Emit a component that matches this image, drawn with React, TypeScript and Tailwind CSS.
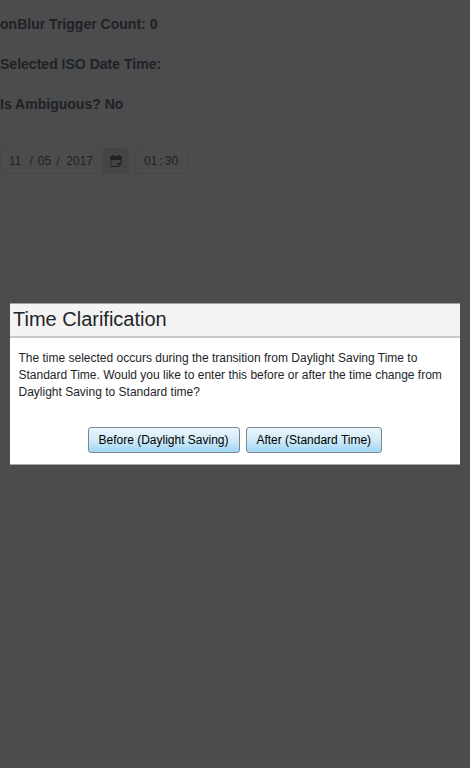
export default function App() {
  return (
    <div className="flex h-[768px] w-[470px] flex-col overflow-hidden bg-[#4b4c4e] font-['Liberation_Sans',Arial,sans-serif] text-[#202224]">
      <div className="flex h-[303px] flex-col">
        <div className="flex flex-col gap-5 pt-[14px] text-[14.04px] leading-5 font-bold">
          <p>onBlur Trigger Count: 0</p>
          <p>Selected ISO Date Time:</p>
          <p>Is Ambiguous? No</p>
        </div>
        <div className="mt-[34px] flex gap-[6px] text-[12px] leading-6">
          <div className="flex h-[26px] w-[129px] overflow-hidden rounded-[3px] border border-[#454648]">
            <div className="flex w-[102px] pl-[8px] whitespace-pre">
              <span className="w-[20.5px]">11</span>
              <span className="w-[8.3px]">/</span>
              <span className="w-[18.5px]">05</span>
              <span className="w-[10px]">/</span>
              <span>2017</span>
            </div>
            <div className="flex flex-1 items-center justify-center bg-[#434547]">
              <svg width="12" height="12" viewBox="0 0 12 12" fill="currentColor">
                <path fillRule="evenodd" d="M1 1h1V0h2v1h4V0h2v1h1a.6.6 0 0 1 .6.6V8.5L8.5 12H1a.6.6 0 0 1-.6-.6V1.6A.6.6 0 0 1 1 1Zm.3 4v6h6V8h3.3V5Zm7 4v1.8L10.1 9Z" />
              </svg>
            </div>
          </div>
          <div className="flex h-[26px] w-[53px] gap-[2px] rounded-[3px] border border-[#454648] pl-[8px]">
            <span>01</span><span>:</span><span>30</span>
          </div>
        </div>
      </div>
      <div className="mx-[10px] h-[162px] border-y border-t-[#a1a2a3] border-b-[#a5a6a7] bg-white text-[#222527]">
        <div className="h-[34px] border-b-2 border-[#c8c8c8] bg-[#f3f3f3] pl-[3px] text-[20px] leading-[30px]">Time Clarification</div>
        <div className="h-[89px] pt-[12px] pl-[8.5px] text-[12px] leading-[17px] whitespace-nowrap">
          <p>The time selected occurs during the transition from Daylight Saving Time to</p>
          <p>Standard Time. Would you like to enter this before or after the time change from</p>
          <p>Daylight Saving to Standard time?</p>
        </div>
        <div className="flex justify-center gap-[6px] text-[12px] text-black">
          <button className="h-[26px] w-[152px] rounded-[3px] border border-[#7c868e] bg-linear-to-b from-[#eaf6fd] from-0% via-[#d2ebf8] via-50% to-[#a7d9f5] to-90% pr-[1px]">Before (Daylight Saving)</button>
          <button className="h-[26px] w-[136px] rounded-[3px] border border-[#7c868e] bg-linear-to-b from-[#eaf6fd] from-0% via-[#d2ebf8] via-50% to-[#a7d9f5] to-90% pr-[0.5px]">After (Standard Time)</button>
        </div>
      </div>
    </div>
  );
}
